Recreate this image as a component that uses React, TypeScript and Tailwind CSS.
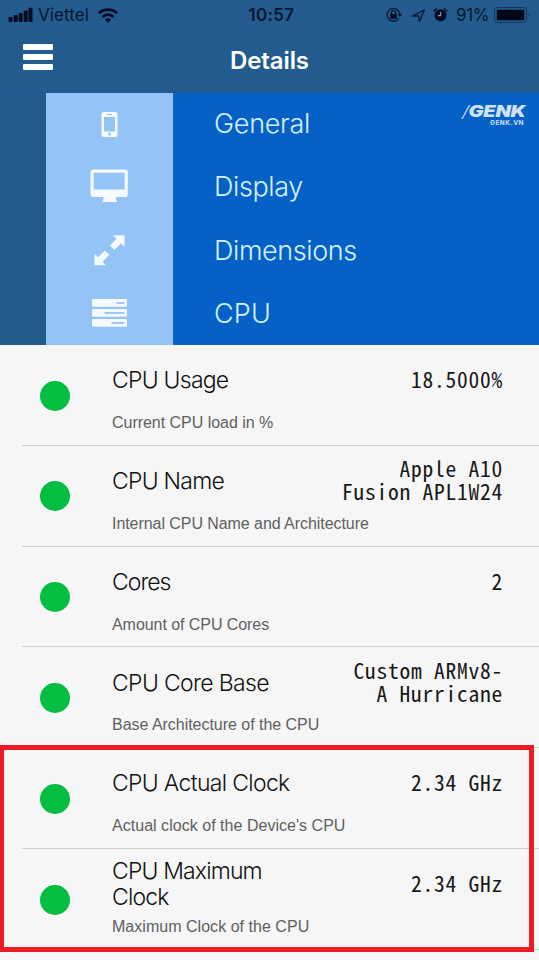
import React from "react";

type Row = { title: string; note: string; value: string[]; titleClass: string; noteClass: string };

const rows: Row[] = [
  { title: "CPU Usage", note: "Current CPU load in %", value: ["18.5000%"], titleClass: "tracking-[-0.750px]", noteClass: "tracking-[-0.030px]" },
  { title: "CPU Name", note: "Internal CPU Name and Architecture", value: ["Apple A10", "Fusion APL1W24"], titleClass: "tracking-[-0.750px]", noteClass: "tracking-[-0.060px]" },
  { title: "Cores", note: "Amount of CPU Cores", value: ["2"], titleClass: "tracking-[-1px]", noteClass: "tracking-[-0.060px]" },
  { title: "CPU Core Base", note: "Base Architecture of the CPU", value: ["Custom ARMv8-", "A Hurricane"], titleClass: "tracking-[-0.650px]", noteClass: "tracking-[-0.030px]" },
  { title: "CPU Actual Clock", note: "Actual clock of the Device's CPU", value: ["2.34 GHz"], titleClass: "tracking-[-0.680px]", noteClass: "tracking-[0.030px]" },
  { title: "CPU Maximum Clock", note: "Maximum Clock of the CPU", value: ["2.34 GHz"], titleClass: "tracking-[-0.850px]", noteClass: "tracking-[0.030px]" },
];

const PhoneIcon = () => (
  <svg width="40" height="40" viewBox="0 0 40 40">
    <path fillRule="evenodd" fill="#f4faff" d="M14 7h11a2.500 2.500 0 0 1 2.500 2.500v20a2.500 2.500 0 0 1-2.500 2.500h-11a2.500 2.500 0 0 1-2.500-2.500v-20a2.500 2.500 0 0 1 2.500-2.500zM14 12v14.500h11V12zM17 9v1h5V9zM19.500 27.600a1.500 1.500 0 1 0 0 3 1.500 1.500 0 0 0 0-3z" />
  </svg>
);
const DisplayIcon = () => (
  <svg width="40" height="40" viewBox="0 0 40 40">
    <path fillRule="evenodd" fill="#f4faff" d="M3.300 1.600h31.700a2.800 2.800 0 0 1 2.800 2.800v21.900a2.800 2.800 0 0 1-2.800 2.800H26v2.200q0 1.200 1 1.800v1H12.500v-1q1-.6 1-1.800V29.100H3.300a2.800 2.800 0 0 1-2.800-2.800V4.400a2.800 2.800 0 0 1 2.800-2.800zM3.700 4.700v16.800h31V4.700z" />
  </svg>
);
const ExpandIcon = () => (
  <svg width="40" height="40" viewBox="0 0 40 40">
    <g fill="#f4faff">
      <path d="M23 4.300h11.500v11.500l-3.500-3.500-6.700 6.700-4.500-4.500 6.700-6.700z" />
      <path d="M4.500 22.800v11.500h11.500l-3.500-3.500 6.800-6.800-4.500-4.500-6.800 6.800z" />
    </g>
  </svg>
);
const ServerIcon = () => (
  <svg width="40" height="40" viewBox="0 0 40 40">
    <g fill="#f4faff">
      <rect x="2" y="5" width="35" height="7.700" rx="1" />
      <rect x="2" y="15" width="35" height="7.700" rx="1" />
      <rect x="2" y="25" width="35" height="7.700" rx="1" />
    </g>
    <g fill="#9fc9f4">
      <rect x="26.500" y="8" width="7.500" height="2" />
      <rect x="14.500" y="18" width="19.500" height="2" />
      <rect x="21.500" y="28" width="12.500" height="2" />
    </g>
  </svg>
);

const menu = [
  { label: "General", icon: <PhoneIcon />, cls: "tracking-[-0.3px] pb-px" },
  { label: "Display", icon: <DisplayIcon />, cls: "tracking-[-0.4px] pb-px" },
  { label: "Dimensions", icon: <ExpandIcon />, cls: "tracking-[-0.4px] pt-px" },
  { label: "CPU", icon: <ServerIcon />, cls: "tracking-[0.2px] pt-px" },
];

const StatusBar = () => (
  <div className="grid h-[30px] grid-cols-3 items-center text-[17px] leading-[20px] text-[#07162f]">
    <div className="flex items-center pl-2">
      <svg width="25" height="16" viewBox="0 0 25 16" fill="#020b20">
        <rect x="0.500" y="10" width="4" height="5" rx="1" />
        <rect x="5.700" y="8" width="4" height="7" rx="1" />
        <rect x="10.700" y="6" width="4" height="9" rx="1" />
        <rect x="15.700" y="3.500" width="4" height="11.500" rx="1" />
        <rect x="20.500" y="0.800" width="4" height="14.200" rx="1" />
      </svg>
      <span className="ml-[5px] w-[60px] whitespace-nowrap tracking-[0.1px]">Viettel</span>
      <svg width="20" height="15" viewBox="0 0 20 15" fill="none" stroke="#020b20" strokeWidth="2.800">
        <path d="M1 5.300a12.800 12.800 0 0 1 18 0" />
        <path d="M4.500 8.900a7.800 7.800 0 0 1 11 0" />
        <path d="M10 14.800 6.900 11.600a4.300 4.300 0 0 1 6.200 0z" fill="#020b20" stroke="none" />
      </svg>
    </div>
    <div className="pl-1 text-center font-semibold tracking-[0.300px]">10:57</div>
    <div className="flex items-center justify-end pr-[7px]">
      <svg width="18" height="18" viewBox="0 0 18 18">
        <path d="M13.700 12.500A6.400 6.400 0 1 1 14.800 8" fill="none" stroke="#07162f" strokeWidth="1.300" />
        <path d="M12.500 8h4.600l-2.200 3z" fill="#07162f" />
        <rect x="5.200" y="8" width="6.600" height="4.800" rx=".6" fill="#020b20" />
        <path d="M6.500 8V6.500a2 2 0 0 1 4 0V8" fill="none" stroke="#020b20" strokeWidth="1.200" />
      </svg>
      <svg className="ml-[8px]" width="15" height="15" viewBox="0 0 15 15">
        <path d="M1.500 8 13.300 2 8.300 13.500 7.500 8z" fill="none" stroke="#07162f" strokeWidth="1.300" strokeLinejoin="round" />
      </svg>
      <svg className="ml-[7px]" width="15" height="16" viewBox="0 0 15 16">
        <circle cx="7.500" cy="8.300" r="6" fill="#020b20" />
        <path d="M1.200 4 3.500 1.800M13.800 4 11.500 1.800" stroke="#020b20" strokeWidth="1.500" strokeLinecap="round" />
        <path d="M7.700 4.800v3.800H4.900" fill="none" stroke="#7f9ab8" strokeWidth="1.100" />
      </svg>
      <span className="ml-[8px] w-[34px] whitespace-nowrap tracking-[-0.3px]">91%</span>
      <svg className="ml-[4px]" width="38" height="18" viewBox="0 0 38 18">
        <rect x=".6" y="1.600" width="32" height="14.800" rx="3" fill="none" stroke="#123559" strokeWidth="1" />
        <rect x="2.800" y="3.700" width="27.500" height="10.600" rx="1" fill="#000615" />
        <path d="M34.500 6.500q2 2.500 0 5z" fill="#123559" />
      </svg>
    </div>
  </div>
);

export default function App() {
  return (
    <div className="relative flex h-[960px] w-[539px] flex-col overflow-hidden bg-[#f6f6f6] font-['Inter',sans-serif]">
      <header className="h-[92px] shrink-0 bg-[#235b8e]">
        <StatusBar />
        <div className="grid h-[62px] grid-cols-[1fr_auto_1fr] items-center">
          <div className="flex flex-col gap-[4px] pb-[9px] pl-[23px]">
            <div className="h-[6px] w-[30px] rounded-[1px] bg-white" />
            <div className="h-[6px] w-[30px] rounded-[1px] bg-white" />
            <div className="h-[6px] w-[30px] rounded-[1px] bg-white" />
          </div>
          <h1 className="text-[24px] leading-[30px] font-semibold tracking-[-0.1px] text-white">Details</h1>
        </div>
      </header>

      <nav className="flex h-[253px] shrink-0 border-t border-[#1b5699] bg-[#0661c6]">
        <div className="w-[46px] bg-[#235b8e]" />
        <div className="flex w-[127px] flex-col bg-[#94c4f6]">
          {menu.map((m) => (
            <div key={m.label} className="flex h-[63.2px] items-center justify-center">{m.icon}</div>
          ))}
        </div>
        <div className="flex flex-1 flex-col pl-[41px]">
          {menu.map((m) => (
            <div key={m.label} className={`flex h-[63.2px] items-center text-[27px] font-light text-[#d5f1ff] ${m.cls}`}>{m.label}</div>
          ))}
        </div>
        <div className="flex w-[77px] flex-col pt-[11px] text-[#cfe2f8]">
          <div className="flex h-[14px] origin-left scale-x-[1.250] items-center text-[16px] leading-[14px] font-black tracking-[-0.3px] whitespace-nowrap italic"><span className="font-light">/</span>GENK</div>
          <div className="pt-[1px] pl-[28px] text-[6.500px] leading-[8px] font-bold tracking-[0.5px]">GENK.VN</div>
        </div>
      </nav>

      <main className="flex flex-col">
        {rows.map((r) => (
          <div key={r.title} className="relative flex h-[100.8px] shrink-0">
            <div className="flex w-[112px] items-center pt-[0.500px] pl-[40px]">
              <div className="size-[30px] rounded-full bg-[#05bd40]" />
            </div>
            <div className="flex flex-1 flex-col">
              <div className="flex h-[70px] items-center justify-between pt-px pr-[36px]">
                <div className={`w-[190px] text-[23px] leading-[26.500px] font-light text-[#111] ${r.titleClass}`}>{r.title}</div>
                <div className="pb-[4px] text-right font-['Noto_Sans_Mono_CJK_JP','Liberation_Mono',monospace] text-[21.500px] leading-[23px] tracking-[0.750px] whitespace-nowrap text-[#181818] [font-feature-settings:'zero']">
                  {r.value.map((v) => (
                    <div key={v}>{v}</div>
                  ))}
                </div>
              </div>
              <div className={`-mt-px font-['Liberation_Sans',sans-serif] text-[16px] leading-[17px] whitespace-nowrap text-[#606060] ${r.noteClass}`}>{r.note}</div>
            </div>
            <div className="absolute right-0 bottom-0 left-[22px] h-px bg-[#cfcfcf]" />
          </div>
        ))}
      </main>

      <div className="absolute top-[745px] left-[-1px] h-[207px] w-[535px] border-5 border-[#ed1c24]" />
    </div>
  );
}
